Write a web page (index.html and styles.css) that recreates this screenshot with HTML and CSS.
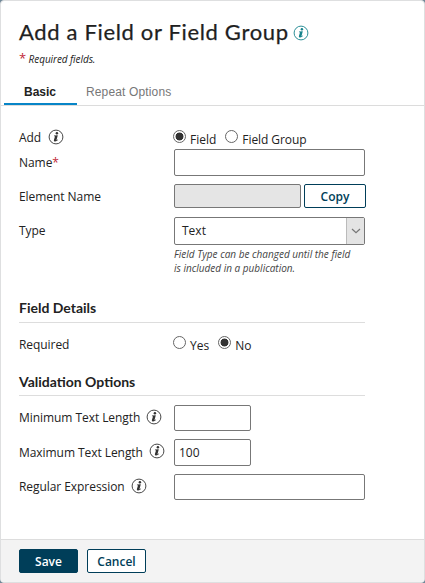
FILE: index.html
```html
<!DOCTYPE html>
<html lang="en">
<head>
<meta charset="utf-8">
<title>Add a Field or Field Group</title>
<link rel="stylesheet" href="styles.css">
</head>
<body>
<svg class="defs" width="0" height="0">
  <symbol id="info" viewBox="0 0 16 16">
    <circle cx="8" cy="8" r="6.9" fill="#fff" stroke="currentColor" stroke-width=".9"/>
    <circle cx="8.900" cy="4.300" r="1.250" fill="currentColor"/>
    <path d="M6 6.600 9.800 6.200 8.500 11c-.1.5.2.4.5.1l.7-.7.4.3C9.200 12 8.200 12.400 7.200 12.400c-1.200 0-1.500-.6-1.300-1.500L6.900 7.700c.1-.4-.2-.4-1-.4z" fill="currentColor"/>
  </symbol>
</svg>
<main class="dialog">
  <header class="header">
    <h1 class="title"><span class="title-text">Add a Field or Field Group</span><svg class="info info-teal"><use href="#info"/></svg></h1>
    <p class="required-note"><span class="star">*</span> Required fields.</p>
  </header>
  <nav class="tabs">
    <a class="tab tab-active">Basic</a>
    <a class="tab">Repeat Options</a>
  </nav>
  <form class="form">
    <div class="row row-add">
      <div class="label">Add<svg class="info"><use href="#info"/></svg></div>
      <div class="choices"><i class="radio radio-on"></i><span class="choice">Field</span><i class="radio"></i><span class="choice choice-group">Field Group</span></div>
    </div>
    <div class="row row-name">
      <div class="label">Name<span class="star">*</span></div>
      <div class="box"></div>
    </div>
    <div class="row row-element">
      <div class="label">Element Name</div>
      <div class="box box-disabled"></div>
      <button type="button" class="button button-copy">Copy</button>
    </div>
    <div class="row row-type">
      <div class="label">Type</div>
      <div class="box select"><span>Text</span><span class="arrow"><svg width="10" height="6" viewBox="0 0 10 6"><path d="M1 1l4 3.700L9 1" fill="none" stroke="#777" stroke-width="1.200"/></svg></span></div>
    </div>
    <p class="hint">Field Type can be changed until the field<br>is included in a publication.</p>
    <h2 class="section section-details">Field Details</h2>
    <div class="row row-required">
      <div class="label">Required</div>
      <div class="choices"><i class="radio"></i><span class="choice">Yes</span><i class="radio radio-on"></i><span class="choice">No</span></div>
    </div>
    <h2 class="section section-validation">Validation Options</h2>
    <div class="row row-min">
      <div class="label">Minimum Text Length<svg class="info"><use href="#info"/></svg></div>
      <div class="box box-short"></div>
    </div>
    <div class="row row-max">
      <div class="label">Maximum Text Length<svg class="info"><use href="#info"/></svg></div>
      <div class="box box-short">100</div>
    </div>
    <div class="row row-regex">
      <div class="label">Regular Expression<svg class="info"><use href="#info"/></svg></div>
      <div class="box"></div>
    </div>
  </form>
  <footer class="footer">
    <button type="button" class="button button-save">Save</button>
    <button type="button" class="button button-cancel">Cancel</button>
  </footer>
</main>
</body>
</html>
```

FILE: styles.css
```css
* { box-sizing: border-box; }
body { margin: 0; background: #6f8797; font: 12px/16px "Open Sans", "Noto Sans", sans-serif; color: #222; }
.defs { display: block; }
.dialog { width: 425px; height: 583px; display: flex; flex-direction: column; background: #fff; border: 1px solid #dedfe0; border-radius: 4px; overflow: hidden; }
.header { height: 77px; padding: 16px 0 0 18px; }
.title { display: flex; align-items: center; height: 30px; margin: 0; font: 400 22px/30px Lato, sans-serif; color: #1f1f1f; -webkit-text-stroke: .25px #1f1f1f; }
.title-text { width: 269px; white-space: nowrap; letter-spacing: .66px; }
.info { width: 16px; height: 16px; margin: 0 0 3px 6px; flex: none; color: #333; }
.info-teal { margin: 1px 0 0 5px; color: #16838c; -webkit-text-stroke: 0; }
.required-note { margin: 4px 0 0; font-size: 10px; font-style: italic; letter-spacing: -.07px; }
.star { color: #bf2636; }
.required-note .star { font-size: 13px; font-style: normal; line-height: 10px; }
.tabs { display: flex; height: 28px; padding-left: 3px; border-bottom: 1px solid #dcdcdc; font: 12px/28px "Liberation Sans", sans-serif; flex: none; }
.tab { height: 27px; padding-left: 9px; color: #777; letter-spacing: .14px; }
.tab-active { width: 73px; padding: 0 0 0 20px; color: #222; font-weight: bold; letter-spacing: 0; border-bottom: 2px solid #0785c7; }
.form { flex: 1; padding: 21px 0 0 18px; }
.row { display: flex; align-items: center; width: 347px; height: 26px; }
.label { display: flex; align-items: center; width: 155px; flex: none; white-space: nowrap; letter-spacing: -.06px; }
.row-add { height: 22px; }
.row-add .info { margin-left: 7px; }
.row-name { height: 27px; }
.row-element { height: 24px; margin-top: 8px; }
.row-type { height: 28px; margin-top: 9px; }
.row-required { height: 18px; margin-top: 12px; }
.row-element .label, .row-required .label { padding-top: 2px; }
.row-min { margin-top: 9px; }
.row-max { height: 27px; margin-top: 8px; }
.row-regex { margin-top: 8px; }
.choices { display: flex; align-items: center; padding-bottom: 3px; margin-left: -1px; }
.choice { padding-top: 6px; margin-left: 4px; margin-right: 9px; }
.choice-group { letter-spacing: -.08px; }
.radio { width: 13px; height: 13px; border: 1px solid #666; border-radius: 50%; background: #fff; }
.radio-on { background: radial-gradient(circle, #333 3.6px, #fff 4.3px); }
.box { height: 100%; width: 191px; flex: none; display: flex; align-items: center; padding-left: 4px; background: #fff; border: 1px solid #777; border-radius: 2px; }
.box-disabled { width: 127px; background: #e5e5e5; }
.box-short { width: 77px; }
.select { padding-left: 7px; justify-content: space-between; }
.arrow { display: flex; align-items: center; justify-content: center; width: 18px; height: 100%; background: #e4e4e4; border-left: 1px solid #bbb; }
.button { display: flex; align-items: center; justify-content: center; height: 24px; padding: 2px 0 0; border: 1px solid #003e59; border-radius: 2px; background: #fff; color: #003e59; font: 600 12px/16px "Open Sans", sans-serif; flex: none; }
.button-copy { width: 62px; margin-left: 3px; }
.hint { margin: 2px 0 0 155px; font-size: 10px; line-height: 14px; font-style: italic; color: #444; white-space: nowrap; }
.section { width: 346px; margin: 0; border-bottom: 1px solid #ddd; font: 700 14px/20px Lato, sans-serif; color: #222; }
.section-details { height: 25px; margin-top: 23px; }
.section-validation { height: 24px; margin-top: 19px; }
.footer { display: flex; gap: 9px; height: 43px; padding: 9px 0 0 18px; background: #f3f3f3; border-top: 1px solid #ddd; flex: none; }
.button-save { width: 59px; background: #003e59; color: #fff; }
.button-cancel { width: 59px; }
```
